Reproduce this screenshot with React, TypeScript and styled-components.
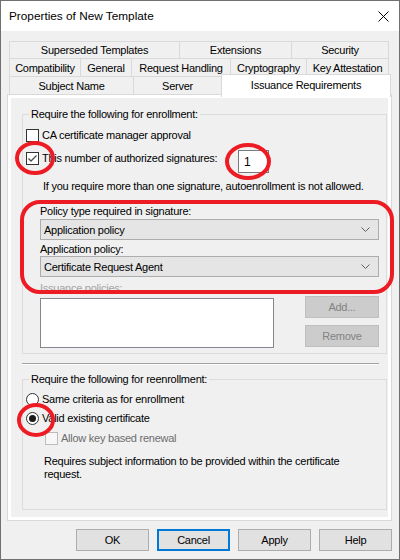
import styled, { createGlobalStyle } from 'styled-components';

const GlobalStyle = createGlobalStyle`
  body {
    margin: 0;
    background: #fff;
  }
  * {
    box-sizing: border-box;
  }
`;

const Window = styled.div`
  position: relative;
  width: 400px;
  height: 560px;
  border: 1px solid #707070;
  background: #f0f0f0;
  font-family: "Liberation Sans", Arial, sans-serif;
  font-size: 11px;
  letter-spacing: -0.25px;
  color: #000;
  display: flex;
  flex-direction: column;
  overflow: hidden;
`;

const TitleBar = styled.div`
  height: 30px;
  flex: none;
  background: #fff;
  display: flex;
  align-items: center;
  justify-content: space-between;
  padding: 0 10px 0 8px;
  font-size: 11.8px;
  letter-spacing: 0;
`;

const TabArea = styled.div`
  margin: 10px 7px 0 6px;
`;

const TabRow = styled.div<{ $h: number }>`
  display: flex;
  align-items: flex-start;
  height: ${({ $h }) => $h}px;
  padding-left: 2px;
  margin-top: -1px;
  &:first-child {
    margin-top: 0;
  }
`;

const Tab = styled.div<{ $w: number; $active?: boolean }>`
  position: relative;
  z-index: ${({ $active }) => ($active ? 2 : 0)};
  width: ${({ $w }) => $w}px;
  height: ${({ $active }) => ($active ? '23px' : '100%')};
  margin-left: -1px;
  margin-top: ${({ $active }) => ($active ? -2 : 0)}px;
  border: 1px solid #d9d9d9;
  border-bottom: ${({ $active }) => ($active ? 'none' : '1px solid #d9d9d9')};
  background: ${({ $active }) => ($active ? '#fff' : '#f0f0f0')};
  display: flex;
  align-items: center;
  justify-content: center;
  padding-bottom: ${({ $active }) => ($active ? 3 : 0)}px;
  white-space: nowrap;
  &:first-child {
    margin-left: 0;
  }
`;

const Panel = styled.div`
  margin-top: -1px;
  height: 427px;
  border: 1px solid #d9d9d9;
  background: #fff;
  padding: 3px;
`;

const Page = styled.div`
  height: 100%;
  background: #f0f0f0;
  padding: 9px 0 0 11px;
  display: flex;
  flex-direction: column;
`;

const Group = styled.fieldset<{ $pb: number }>`
  margin: 0;
  width: 365px;
  min-inline-size: 0;
  border: 1px solid #dcdcdc;
  padding: 0 0 ${({ $pb }) => $pb}px 3px;
  display: flex;
  flex-direction: column;
`;

const Legend = styled.legend`
  margin-left: 3px;
  padding: 0 2px;
  line-height: 14px;
`;

const Row = styled.div<{ $mt: number; $pl?: number }>`
  display: flex;
  align-items: flex-start;
  margin-top: ${({ $mt }) => $mt}px;
  padding-left: ${({ $pl }) => $pl ?? 0}px;
`;

const Choice = styled.label<{ $w?: number; $disabled?: boolean }>`
  display: flex;
  align-items: center;
  gap: 3px;
  height: 16px;
  width: ${({ $w }) => ($w ? `${$w}px` : 'auto')};
  color: ${({ $disabled }) => ($disabled ? '#6d6d6d' : '#000')};
  white-space: nowrap;
`;

const Box = styled.span<{ $disabled?: boolean }>`
  width: 13px;
  height: 13px;
  flex: none;
  border: 1px solid ${({ $disabled }) => ($disabled ? '#bcbcbc' : '#333')};
  background: ${({ $disabled }) => ($disabled ? '#f7f7f7' : '#fff')};
  display: flex;
  align-items: center;
  justify-content: center;
`;

const Radio = styled.span`
  width: 13px;
  height: 13px;
  flex: none;
  border: 1px solid #333;
  border-radius: 50%;
  background: #fff;
  display: flex;
  align-items: center;
  justify-content: center;
`;

const Dot = styled.span`
  width: 7px;
  height: 7px;
  border-radius: 50%;
  background: #1a1a1a;
`;

const NumberBox = styled.div`
  width: 31px;
  height: 23px;
  border: 1px solid #7a7a7a;
  background: #fff;
  padding: 4px 0 0 5px;
  font-size: 12px;
`;

const Text = styled.div<{ $mt: number; $pl: number; $muted?: boolean; $lh?: number }>`
  margin-top: ${({ $mt }) => $mt}px;
  padding-left: ${({ $pl }) => $pl}px;
  line-height: ${({ $lh }) => $lh ?? 14}px;
  color: ${({ $muted }) => ($muted ? '#a3a3a3' : '#000')};
  white-space: nowrap;
`;

const Combo = styled.div<{ $mt: number }>`
  margin: ${({ $mt }) => $mt}px 0 0 14px;
  width: 339px;
  height: 21px;
  border: 1px solid #adadad;
  background: #e5e5e5;
  display: flex;
  align-items: center;
  justify-content: space-between;
  padding: 0 8px 0 3px;
`;

const ListArea = styled.div`
  margin: 1px 0 0 14px;
  width: 339px;
  display: flex;
  justify-content: space-between;
`;

const ListBox = styled.div`
  margin-top: 2px;
  width: 234px;
  height: 50px;
  border: 1px solid #828790;
  background: #fff;
`;

const SideButtons = styled.div`
  display: flex;
  flex-direction: column;
  gap: 7px;
`;

const Button = styled.button<{ $w?: number; $default?: boolean }>`
  width: ${({ $w }) => $w ?? 73}px;
  height: 22px;
  padding: 0;
  font: inherit;
  letter-spacing: inherit;
  border: ${({ $default }) => ($default ? '2px solid #0078d7' : '1px solid #adadad')};
  background: #e1e1e1;
  color: #000;
  &:disabled {
    background: #cccccc;
    border-color: #bfbfbf;
    color: #838383;
  }
`;

const Separator = styled.div`
  margin-top: 9px;
  width: 357px;
  height: 2px;
  border-top: 1px solid #a0a0a0;
  border-bottom: 1px solid #fff;
`;

const Spacer = styled.div<{ $h: number }>`
  height: ${({ $h }) => $h}px;
`;

const ButtonBar = styled.div`
  margin-top: 8px;
  display: flex;
  justify-content: flex-end;
  gap: 8px;
  padding-right: 7px;
`;

const Marks = styled.svg`
  position: absolute;
  top: -1px;
  left: -1px;
  pointer-events: none;
`;

const tabRows: { label: string; w: number; active?: boolean }[][] = [
  [
    { label: 'Superseded Templates', w: 171 },
    { label: 'Extensions', w: 113 },
    { label: 'Security', w: 98 },
  ],
  [
    { label: 'Compatibility', w: 72 },
    { label: 'General', w: 52 },
    { label: 'Request Handling', w: 100 },
    { label: 'Cryptography', w: 77 },
    { label: 'Key Attestation', w: 83 },
  ],
  [
    { label: 'Subject Name', w: 125 },
    { label: 'Server', w: 89 },
    { label: 'Issuance Requirements', w: 170, active: true },
  ],
];

const Chevron = () => (
  <svg width="9" height="5" viewBox="0 0 9 5">
    <polyline points="0.5,0.5 4.5,4.5 8.5,0.5" fill="none" stroke="#606060" strokeWidth="1" />
  </svg>
);

const Check = () => (
  <svg width="11" height="11" viewBox="0 0 11 11">
    <polyline points="1.5,5.5 4,8 9.5,2.5" fill="none" stroke="#4d4d4d" strokeWidth="1.3" />
  </svg>
);

export default function App() {
  return (
    <>
      <GlobalStyle />
      <Window>
        <TitleBar>
          <span>Properties of New Template</span>
          <svg width="11" height="11" viewBox="0 0 11 11">
            <path d="M0.5 0.5 L10.5 10.5 M10.5 0.5 L0.5 10.5" stroke="#000" strokeWidth="1" />
          </svg>
        </TitleBar>

        <TabArea>
          {tabRows.map((row, i) => (
            <TabRow key={i} $h={i === 0 ? 18 : 19}>
              {row.map((t) => (
                <Tab key={t.label} $w={t.w} $active={t.active}>
                  {t.label}
                </Tab>
              ))}
            </TabRow>
          ))}
          <Panel>
            <Page>
              <Group $pb={5}>
                <Legend>Require the following for enrollment:</Legend>
                <Row $mt={6}>
                  <Choice>
                    <Box />
                    CA certificate manager approval
                  </Choice>
                </Row>
                <Row $mt={7}>
                  <Choice $w={212}>
                    <Box>
                      <Check />
                    </Box>
                    This number of authorized signatures:
                  </Choice>
                  <NumberBox>1</NumberBox>
                </Row>
                <Text $mt={6} $pl={17}>
                  If you require more than one signature, autoenrollment is not allowed.
                </Text>
                <Text $mt={11} $pl={14}>
                  Policy type required in signature:
                </Text>
                <Combo $mt={1}>
                  Application policy
                  <Chevron />
                </Combo>
                <Text $mt={2} $pl={14}>
                  Application policy:
                </Text>
                <Combo $mt={0}>
                  Certificate Request Agent
                  <Chevron />
                </Combo>
                <Text $mt={4} $pl={14} $muted>
                  Issuance policies:
                </Text>
                <ListArea>
                  <ListBox />
                  <SideButtons>
                    <Button $w={74} disabled>
                      Add...
                    </Button>
                    <Button $w={74} disabled>
                      Remove
                    </Button>
                  </SideButtons>
                </ListArea>
              </Group>

              <Separator />
              <Spacer $h={7} />

              <Group $pb={28}>
                <Legend>Require the following for reenrollment:</Legend>
                <Row $mt={5}>
                  <Choice>
                    <Radio />
                    Same criteria as for enrollment
                  </Choice>
                </Row>
                <Row $mt={3}>
                  <Choice>
                    <Radio>
                      <Dot />
                    </Radio>
                    Valid existing certificate
                  </Choice>
                </Row>
                <Row $mt={4} $pl={19}>
                  <Choice $disabled>
                    <Box $disabled />
                    Allow key based renewal
                  </Choice>
                </Row>
                <Text $mt={9} $pl={18} $lh={13}>
                  Requires subject information to be provided within the certificate
                  <br />
                  request.
                </Text>
              </Group>
            </Page>
          </Panel>
        </TabArea>

        <ButtonBar>
          <Button>OK</Button>
          <Button $default>Cancel</Button>
          <Button>Apply</Button>
          <Button>Help</Button>
        </ButtonBar>

        <Marks width="400" height="560" viewBox="0 0 400 560">
          <g fill="none" stroke="#ed1c24" strokeWidth="4">
            <ellipse cx="35" cy="158" rx="18" ry="15" />
            <ellipse cx="248" cy="161.5" rx="21" ry="16.5" />
            <rect x="22" y="202" width="370" height="90" rx="18" ry="18" />
            <ellipse cx="36" cy="420" rx="17" ry="15" />
          </g>
        </Marks>
      </Window>
    </>
  );
}
